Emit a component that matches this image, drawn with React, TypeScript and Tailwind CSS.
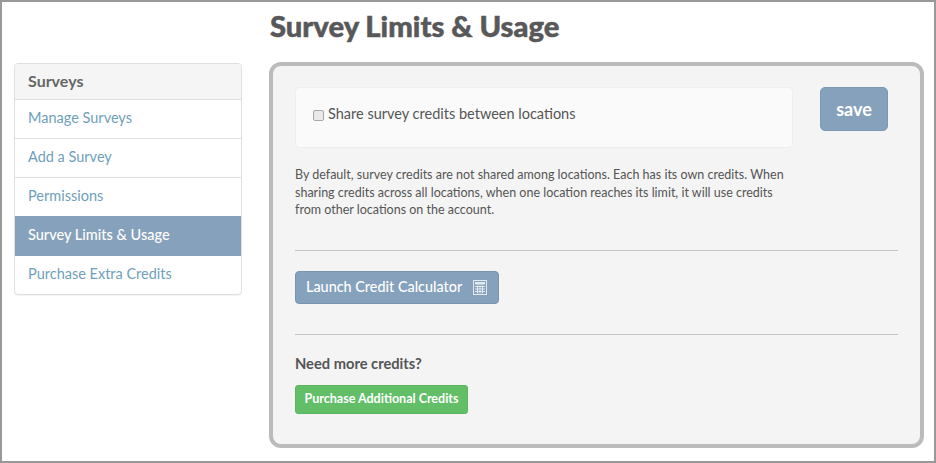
import React from 'react';

const links = ['Manage Surveys', 'Add a Survey', 'Permissions', 'Survey Limits & Usage', 'Purchase Extra Credits'];

function CalculatorIcon() {
  return (
    <svg width="14" height="15" viewBox="0 0 14 15" fill="none" className="ml-[11px]">
      <rect x="0.5" y="0.5" width="13" height="14" stroke="#e4e9ef" />
      <rect x="2" y="2" width="10" height="2.5" fill="#e4e9ef" />
      <path d="M2 6.5h10M2 9h10M2 11.5h10M4.5 5.5v8M7 5.5v8M9.5 5.5v8" stroke="#e4e9ef" strokeWidth="1" />
    </svg>
  );
}

export default function App() {
  return (
    <div className="w-[936px] h-[463px] box-border border-2 border-[#999999] bg-white flex font-['Lato',sans-serif] text-[#555555] overflow-hidden">
      <aside className="w-[228px] ml-[12px] mt-[61px] shrink-0 self-start rounded-[4px] border border-[#e0e0e0] shadow-[0_1px_1px_rgba(0,0,0,0.05)] overflow-hidden">
        <div className="h-[36px] px-[13px] pb-px flex items-center bg-[#f5f5f5] border-b border-[#e0e0e0] text-[16px] font-bold text-[#666666]">
          Surveys
        </div>
        <div className="h-[39px] px-[13px] pb-[2px] flex items-center text-[14.5px] text-[#6f9fba] border-b border-[#e0e0e0]">{links[0]}</div>
        <div className="h-[39px] px-[13px] pb-[2px] flex items-center text-[14.5px] text-[#6f9fba] border-b border-[#e0e0e0]">{links[1]}</div>
        <div className="h-[38px] px-[13px] pb-[2px] flex items-center text-[14.5px] text-[#6f9fba]">{links[2]}</div>
        <div className="h-[40px] px-[13px] pb-[2px] flex items-center bg-[#86a1bc] text-white text-[14.5px] font-medium">{links[3]}</div>
        <div className="h-[38px] px-[13px] pb-[2px] flex items-center text-[14.5px] text-[#6f9fba]">{links[4]}</div>
      </aside>

      <main className="ml-[27px] w-[655px] shrink-0">
        <h1 className="h-[60px] pl-px pt-[7px] text-[29.2px] leading-[34px] font-black text-[#58585a] [-webkit-text-stroke:0.5px_#58585a]">
          Survey Limits &amp; Usage
        </h1>
        <div className="h-[386px] box-border border-4 border-[#bbbbbb] rounded-[12px] bg-[#f4f4f4] pl-[22px] pr-[22px] pt-[21px]">
          <div className="flex items-start">
            <div className="w-[498px] h-[61px] box-border bg-[#fafafa] border border-[#eeeeee] rounded-[4px] pl-[17px] flex items-center pb-[8px]">
              <input
                type="checkbox"
                readOnly
                className="appearance-none w-[11px] h-[11px] mr-[4px] mt-[3px] rounded-[2px] border border-[#a8a8a8] bg-[#e9e9e9]"
              />
              <span className="text-[14.5px] text-[#555555]">Share survey credits between locations</span>
            </div>
            <button className="ml-[27px] w-[68px] h-[44px] rounded-[5px] bg-[#86a1bc] border border-[#7d98b3] text-white text-[18px] font-bold">
              save
            </button>
          </div>
          <p className="mt-[18px] w-[498px] text-[12.5px] leading-[17.5px] text-[#555555]">
            By default, survey credits are not shared among locations. Each has its own credits. When sharing credits across all locations, when one location reaches its limit, it will use credits from other locations on the account.
          </p>
          <hr className="mt-[31px] w-[603px] border-t border-[#c4c4c4]" />
          <button className="mt-[20px] w-[204px] h-[33px] rounded-[4px] bg-[#86a1bc] border border-[#7a95b0] text-white text-[14.4px] font-medium flex items-center pl-[10px]">
            Launch Credit Calculator
            <CalculatorIcon />
          </button>
          <hr className="mt-[30px] w-[603px] border-t border-[#c4c4c4]" />
          <div className="mt-[20px] text-[14.7px] leading-[17px] font-bold text-[#555555]">Need more credits?</div>
          <button className="mt-[13px] w-[173px] h-[29px] rounded-[3px] bg-[#62bf68] border border-[#5cb660] text-white text-[12.5px] font-bold">
            Purchase Additional Credits
          </button>
        </div>
      </main>
    </div>
  );
}
